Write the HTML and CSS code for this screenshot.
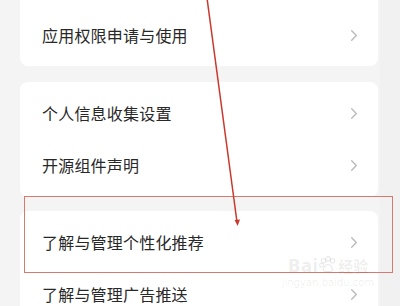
FILE: index.html
```html
<!DOCTYPE html>
<html lang="zh">
<head>
<meta charset="utf-8">
<link rel="stylesheet" href="styles.css">
</head>
<body>
<div class="page">
  <div class="card card-first">
    <div class="row"><span class="label">应用权限申请与使用</span><svg class="chev" viewBox="0 0 6 11"><polyline points="0.7,0.7 5.3,5.5 0.7,10.3"/></svg></div>
  </div>
  <div class="card">
    <div class="row"><span class="label">个人信息收集设置</span><svg class="chev" viewBox="0 0 6 11"><polyline points="0.7,0.7 5.3,5.5 0.7,10.3"/></svg></div>
    <div class="row"><span class="label">开源组件声明</span><svg class="chev" viewBox="0 0 6 11"><polyline points="0.7,0.7 5.3,5.5 0.7,10.3"/></svg></div>
  </div>
  <div class="card">
    <div class="row"><span class="label">了解与管理个性化推荐</span><svg class="chev" viewBox="0 0 6 11"><polyline points="0.7,0.7 5.3,5.5 0.7,10.3"/></svg></div>
    <div class="row"><span class="label">了解与管理广告推送</span><svg class="chev" viewBox="0 0 6 11"><polyline points="0.7,0.7 5.3,5.5 0.7,10.3"/></svg></div>
  </div>

  <div class="highlight"></div>
  <svg class="arrow" viewBox="0 0 400 306" width="400" height="306">
    <line x1="207" y1="-2" x2="237" y2="222"/>
    <polygon points="237.6,226 234.6,220 240,219.4"/>
  </svg>
  <div class="watermark">
    <div class="wm-top"><span>Bai</span><svg class="paw" viewBox="0 0 24 22"><circle cx="6" cy="6" r="3"/><circle cx="12" cy="3.5" r="3"/><circle cx="18" cy="6" r="3"/><circle cx="3.5" cy="12" r="2.6"/><path d="M6 19 C6 13 10 11 12 11 C14 11 18 13 18 19 C18 21 6 21 6 19 Z"/></svg><span>经验</span></div>
    <div class="wm-url">jingyan.baidu.com</div>
  </div>
</div>
</body>
</html>
```
FILE: styles.css
```css
html, body {
  margin: 0;
  padding: 0;
}
body {
  background: #f4f4f4;
  font-family: "Noto Sans CJK SC", "Noto Sans", sans-serif;
}
.page {
  position: relative;
  width: 400px;
  height: 306px;
  overflow: hidden;
  display: flex;
  flex-direction: column;
  gap: 14px;
  padding: 0 22px 0 20px;
  box-sizing: border-box;
  background: linear-gradient(to right, #f4f4f4 0, #f4f4f4 380px, #f1f1f1 380px);
}
.card {
  background: #fff;
  border-radius: 8px;
  padding: 5px 21px 6px 22px;
  flex-shrink: 0;
}
.card-first {
  border-radius: 0 0 8px 8px;
  padding-top: 9px;
  padding-bottom: 5px;
  margin-bottom: 2px;
}
.row {
  height: 52px;
  display: flex;
  align-items: center;
  justify-content: space-between;
}
.label {
  font-size: 16px;
  color: #282828;
  letter-spacing: 0.2px;
}
.chev {
  width: 6px;
  height: 11px;
  fill: none;
  stroke: #b9b9b9;
  stroke-width: 1.3;
  stroke-linecap: round;
  stroke-linejoin: round;
}
.highlight {
  position: absolute;
  left: 24px;
  top: 196px;
  width: 369px;
  height: 77px;
  box-sizing: border-box;
  border: 1.5px solid #d67a70;
}
.arrow {
  position: absolute;
  left: 0;
  top: 0;
}
.arrow line {
  stroke: #c9392e;
  stroke-width: 1.5;
}
.arrow polygon {
  fill: #c9392e;
}
.watermark {
  position: absolute;
  left: 283px;
  top: 256px;
  width: 90px;
  color: rgba(0, 0, 0, 0.08);
  font-family: "DejaVu Sans", sans-serif;
  display: flex;
  flex-direction: column;
  align-items: center;
}
.wm-top {
  display: flex;
  align-items: flex-end;
  font-size: 17px;
  font-weight: bold;
  line-height: 20px;
}
.wm-top span:last-child {
  font-family: "Noto Sans CJK SC", sans-serif;
  font-size: 15px;
}
.paw {
  width: 18px;
  height: 17px;
  fill: none;
  stroke: rgba(0, 0, 0, 0.09);
  stroke-width: 1.4;
  margin: 0 1px 3px;
}
.wm-url {
  font-size: 10px;
  line-height: 14px;
}
```
